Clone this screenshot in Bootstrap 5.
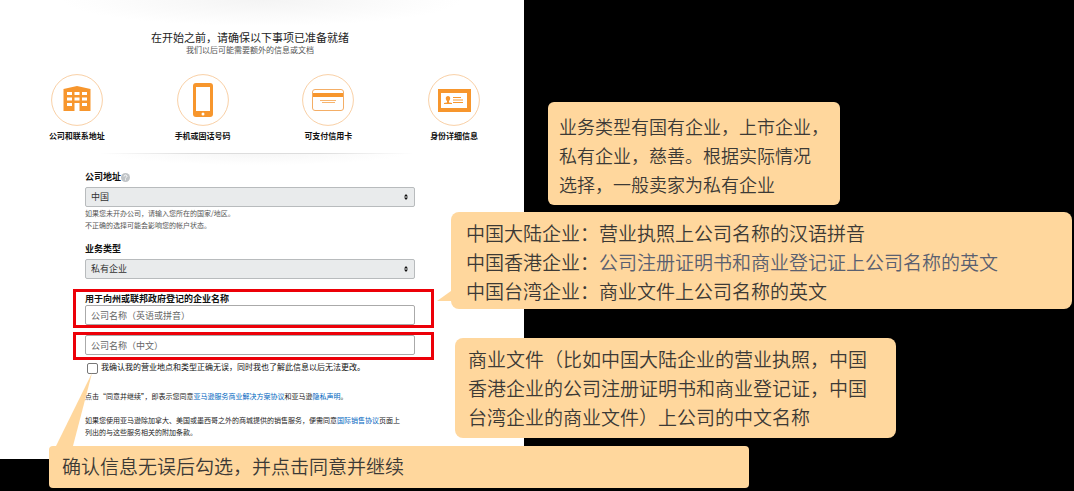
<!DOCTYPE html>
<html lang="zh-CN">
<head>
<meta charset="utf-8">
<meta name="viewport" content="width=device-width, initial-scale=1">
<title>在开始之前</title>
<link href="https://cdn.jsdelivr.net/npm/bootstrap@5.3.0/dist/css/bootstrap.min.css" rel="stylesheet">
<style>
body{background:#000;color:#111;font-family:"Noto Sans CJK SC",sans-serif}
.stage{display:grid;grid-template-columns:524fr 550fr;align-items:start}
.sheet{background:radial-gradient(ellipse 200px 26px at 50% 0,#f4f4f4,#fff);background-color:#fff;padding:29px 0 21px;min-width:0}
.sheet header{padding-right:24px}
.sheet h1{font-size:11px;line-height:16px;font-weight:400;margin:0;color:#222}
.subtitle{font-size:8px;line-height:10px;color:#555;margin:0}
.steps{padding:19px 7px 0 14px}
.steps svg{width:52px;height:52px;display:block;margin:0 auto 3px}
.steps span{font-size:8px;line-height:14px;font-weight:700;display:block}
.divider{height:14px;margin:10px 110px 0 100px;background:radial-gradient(ellipse 150px 12px at 50% 0,#f6f6f6,#fff)}
.divider::before{content:"";display:block;height:1px;background:linear-gradient(90deg,#fff,#ddd 30%,#ddd 70%,#fff)}
.signup{padding:4px 90px 0 73px}
.inset{padding:0 19px 0 12px}
.caption{font-size:9px;line-height:12px;font-weight:700;display:block;margin:0}
.signup .form-select,.signup .form-control{font-size:9px;line-height:12px;height:20px;min-height:0;padding:0 5px;border-radius:2px;border:1px solid #aaa;color:#333}
.signup .form-select{background-color:#e9ebec;border-color:#b8bbbd;background-image:url("data:image/svg+xml,%3Csvg xmlns='http://www.w3.org/2000/svg' viewBox='0 0 6 8'%3E%3Cpath fill='%23111' d='M1 3.4 3 1l2 2.4zM1 4.6h4L3 7z'/%3E%3C/svg%3E");background-size:6px 8px;background-position:right 5px center}
.signup .form-control::placeholder{color:#666}
.hint{font-size:7px;line-height:12px;color:#555;margin:0}
.frame{border:3px solid #ec0008;padding:1px 16px 0 9px;margin-top:10px}
.frame-second{padding-top:0;padding-bottom:2px;margin-top:4px}
.agree{padding-left:14px;font-size:8px;line-height:14px}
.agree .form-check-input{width:11px;height:11px;margin:3px 3px 0 0;border:1px solid #777;border-radius:2px;flex:none}
.legal{font-size:7px;line-height:12px;margin:0;color:#222}
.legal a{color:#0066c0;text-decoration:none}
.notes{padding-top:102px;padding-right:2px}
.note{background:#ffd79d;color:#3c3a36;font-size:19px;line-height:29px;font-weight:350;border-radius:8px;position:relative}
.note p{margin:0}
.note-type{font-size:18px;margin:0 232px 0 24px;padding:10px 0 6px 11px;border-radius:6px}
.note-names{margin:7px 0 0 -73px;padding:6px 14px 4px 15px}
.note-names em{font-style:normal;color:#5a6070}
.note-chinese{margin:29px 176px 0 -69px;padding:6px 12px 7px 13px}
.note-confirm{grid-column:1/-1;margin:-13px 325px 3px 49px;padding:5px 13px 8px;border-radius:4px}
.tail{position:absolute;fill:#ffd79d}
.tail-names{right:100%;top:79px}
.tail-confirm{left:7px;bottom:100%}
</style>
</head>
<body>
<div class="stage">
<main class="sheet">
  <header class="text-center">
    <h1>在开始之前，请确保以下事项已准备就绪</h1>
    <p class="subtitle">我们以后可能需要额外的信息或文档</p>
  </header>
  <div class="steps row g-0 text-center">
    <div class="col-3">
      <svg viewBox="0 0 52 52" aria-hidden="true"><circle cx="26" cy="26" r="25.4" fill="#fff" stroke="#f9d0a6"/><path fill="#f7962d" d="M12.500 15 26 12l13.500 3v22h-27z"/><path fill="#fff" d="M16 18h5v3h-5zm7.500 0h5v3h-5zm7.500 0h5v3h-5zM16 23.500h5v3h-5zm7.500 0h5v3h-5zm7.500 0h5v3h-5zM16 29h5v3h-5zm15 0h5v3h-5zM23.500 29h5v8h-5z"/></svg>
      <span>公司和联系地址</span>
    </div>
    <div class="col-3">
      <svg viewBox="0 0 52 52" aria-hidden="true"><circle cx="26" cy="26" r="25.4" fill="#fff" stroke="#f9d0a6"/><rect x="16" y="9" width="20" height="34" rx="3" fill="#f7962d"/><path fill="#fff" d="M19 13h14v24H19z"/><circle cx="26" cy="40" r="1.500" fill="#fff"/></svg>
      <span>手机或固话号码</span>
    </div>
    <div class="col-3">
      <svg viewBox="0 0 52 52" aria-hidden="true"><circle cx="26" cy="26" r="25.400" fill="#fff" stroke="#f9d0a6"/><rect x="10.500" y="15.500" width="31" height="21" rx="2.500" fill="#fff" stroke="#f4ae66"/><path fill="#f7962d" d="M11 19h30v4H11z"/><path stroke="#f7b56f" d="M18 26.500h16M20 28.500h13"/></svg>
      <span>可支付信用卡</span>
    </div>
    <div class="col-3">
      <svg viewBox="0 0 52 52" aria-hidden="true"><circle cx="26" cy="26" r="25.400" fill="#fff" stroke="#f9d0a6"/><path fill="#f7962d" d="M10 15h33v23H10z"/><path fill="#fff" d="M13 19h26v15H13z"/><path fill="#f7962d" d="M20 22c-3 0-2.500 4-1 5v1.500L16 29v1h8v-1l-3-.5V27c1.500-1 2-5-1-5z"/><path stroke="#f7962d" d="M25 23.500h8M25 26h10M25 28.500h10"/></svg>
      <span>身份详细信息</span>
    </div>
  </div>
  <div class="divider"></div>
  <form class="signup">
    <div class="inset">
      <div class="d-flex align-items-center mb-1">
        <label class="caption" for="country">公司地址</label>
        <svg width="9" height="9" viewBox="0 0 9 9" aria-hidden="true"><circle cx="4.500" cy="4.500" r="4.500" fill="#bfc3c6"/><path d="M3 3.500C3 1.600 6 1.600 6 3.400 6 4.300 4.500 4.300 4.500 5.500M4.500 6.300v1" fill="none" stroke="#fff"/></svg>
      </div>
      <select class="form-select" id="country"><option>中国</option></select>
      <p class="hint">如果您未开办公司，请输入您所在的国家/地区。</p>
      <p class="hint mb-2">不正确的选择可能会影响您的帐户状态。</p>
      <label class="caption pt-1 mb-1" for="kind">业务类型</label>
      <select class="form-select" id="kind"><option>私有企业</option></select>
    </div>
    <div class="frame">
      <label class="caption" for="latin">用于向州或联邦政府登记的企业名称</label>
      <input class="form-control" id="latin" type="text" placeholder="公司名称（英语或拼音）">
    </div>
    <div class="frame frame-second">
      <input class="form-control" type="text" aria-label="公司名称（中文）" placeholder="公司名称（中文）">
    </div>
    <div class="agree d-flex">
      <input class="form-check-input" type="checkbox" id="agree">
      <label for="agree">我确认我的营业地点和类型正确无误，同时我也了解此信息以后无法更改。</label>
    </div>
    <div class="inset pt-3">
      <p class="legal">点击“同意并继续”，即表示您同意<a href="#">亚马逊服务商业解决方案协议</a>和亚马逊<a href="#">隐私声明</a>。</p>
      <p class="legal mt-2 pt-1">如果您使用亚马逊除加拿大、美国或墨西哥之外的商城提供的销售服务，便需同意<a href="#">国际销售协议</a>页面上<br>列出的与这些服务相关的附加条款。</p>
    </div>
  </form>
</main>
<aside class="notes">
  <div class="note note-type"><p>业务类型有国有企业，上市企业，<br>私有企业，慈善。根据实际情况<br>选择，一般卖家为私有企业</p></div>
  <div class="note note-names">
    <svg class="tail tail-names" width="14" height="12" viewBox="0 0 14 12" aria-hidden="true"><path d="M14 0v10H0z"/></svg>
    <p>中国大陆企业：营业执照上公司名称的汉语拼音</p>
    <p>中国香港企业：<em>公司注册证明书和商业登记证上公司名称的英文</em></p>
    <p>中国台湾企业：商业文件上公司名称的英文</p>
  </div>
  <div class="note note-chinese"><p>商业文件（比如中国大陆企业的营业执照，中国<br>香港企业的公司注册证明书和商业登记证，中国<br>台湾企业的商业文件）上公司的中文名称</p></div>
</aside>
<div class="note note-confirm">
  <svg class="tail tail-confirm" width="37" height="73" viewBox="0 0 37 73" aria-hidden="true"><path d="M36 0 17 73H0z"/></svg>
  <p>确认信息无误后勾选，并点击同意并继续</p>
</div>
</div>
<script src="https://cdn.jsdelivr.net/npm/bootstrap@5.3.0/dist/js/bootstrap.bundle.min.js"></script>
</body>
</html>
